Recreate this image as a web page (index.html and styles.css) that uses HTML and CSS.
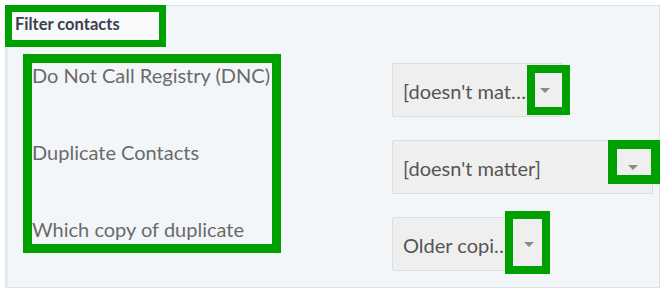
FILE: index.html
```html
<!DOCTYPE html>
<html>
<head>
<meta charset="utf-8">
<link rel="stylesheet" href="styles.css">
</head>
<body>
<div class="panel">
  <div class="title">Filter contacts</div>
  <div class="form">
    <div class="labels">
      <div class="label">Do Not Call Registry (DNC)</div>
      <div class="label">Duplicate Contacts</div>
      <div class="label">Which copy of duplicate</div>
    </div>
    <div class="selects">
      <div class="select s1"><span class="val">[doesn't mat…</span><span class="arrow"></span><span class="mark m1"></span></div>
      <div class="select s2"><span class="val">[doesn't matter]</span><span class="arrow"></span><span class="mark m2"></span></div>
      <div class="select s3"><span class="val">Older copi…</span><span class="arrow"></span><span class="mark m3"></span></div>
    </div>
  </div>
</div>
</body>
</html>
```

FILE: styles.css
```css
* { box-sizing: border-box; }
html, body { margin: 0; padding: 0; background: #ffffff; }
body { font-family: Lato, "Open Sans", sans-serif; }

.panel {
  margin: 5px 0 0 5px;
  width: 655px;
  height: 283px;
  background: #f3f6f9;
  border: 1px solid #dfe3e7;
  box-shadow: inset 2px 0 0 #e9ecef;
}

.title {
  margin: -1px 0 0 -1px;
  width: 161px;
  height: 42px;
  border: 7px solid #00a000;
  background: #f7f9fb;
  padding: 1px 0 0 3px;
  font-size: 16.5px;
  font-weight: 700;
  line-height: 22px;
  color: #3a3f4f;
}

.form {
  display: flex;
  align-items: flex-start;
  margin: 7px 0 0 17px;
  gap: 111px;
}

.labels {
  width: 258px;
  border: 9px solid #00a000;
  padding: 0 0 3px 0;
  display: flex;
  flex-direction: column;
  gap: 53px;
}

.label {
  font-size: 20px;
  line-height: 24px;
  color: #6a6a6a;
  white-space: nowrap;
}

.selects {
  padding-top: 9px;
  display: flex;
  flex-direction: column;
  gap: 23px;
}

.select {
  position: relative;
  height: 54px;
  background: #efefef;
  border: 1px solid #dcdcdc;
  border-radius: 2px;
  display: flex;
  align-items: center;
  justify-content: space-between;
  padding: 1px 12px 0 10px;
  font-size: 20px;
  color: #555555;
}

.s1 { width: 171px; }
.s2 { width: 261px; padding-right: 14px; }
.s3 { width: 155px; }

.val { white-space: nowrap; }

.arrow {
  width: 0;
  height: 0;
  border-left: 5px solid transparent;
  border-right: 5px solid transparent;
  border-top: 5px solid #8a8a8a;
}

.mark {
  position: absolute;
  border: 8px solid #00a000;
}
.m1 { left: 134px; top: 1px; width: 43px; height: 50px; }
.m2 { left: 215px; top: -1px; width: 52px; height: 44px; border-width: 9px; }
.m3 { left: 112px; top: -7px; width: 45px; height: 63px; }
```
